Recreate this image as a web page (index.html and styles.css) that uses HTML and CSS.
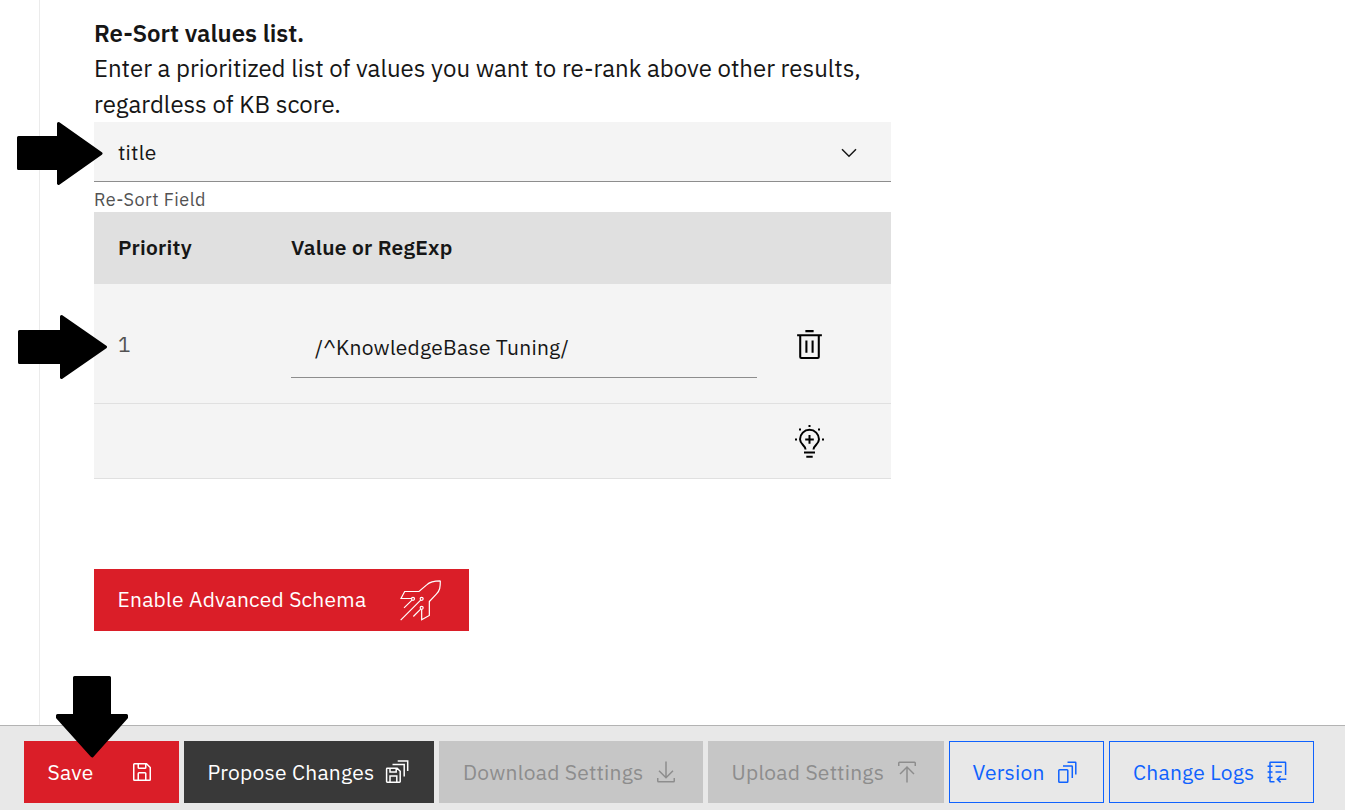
FILE: index.html
```html
<!DOCTYPE html>
<html lang="en">
<head>
<meta charset="utf-8">
<title>Re-Sort values list</title>
<link rel="stylesheet" href="styles.css">
</head>
<body>
<div class="app">
  <main class="main">
    <div class="rail"></div>
    <section class="panel">
      <h1 class="title">Re-Sort values list.</h1>
      <p class="intro">Enter a prioritized list of values you want to re-rank above other results,<br>regardless of KB score.</p>
      <div class="select">
        <span>title</span>
        <svg class="chevron" width="16" height="10" viewBox="0 0 16 10"><path d="M1 1.200L8 8.200L15 1.200" fill="none" stroke="#161616" stroke-width="1.500"/></svg>
      </div>
      <div class="helper">Re-Sort Field</div>
      <div class="table">
        <div class="row head"><span>Priority</span><span>Value or RegExp</span></div>
        <div class="row item">
          <span class="num">1</span>
          <div class="field">/^KnowledgeBase Tuning/</div>
          <svg class="row-icon" width="33" height="33" viewBox="0 0 32 32"><path d="M12 12h2v12h-2zM18 12h2v12h-2zM4 6v2h2v20a2 2 0 002 2h16a2 2 0 002-2V8h2V6zM8 28V8h16v20zM12 2h8v2h-8z"/></svg>
        </div>
        <div class="row add">
          <span></span><span></span>
          <svg class="row-icon" width="33" height="33" viewBox="0 0 33 33">
            <path d="M12.500 24.400C12.500 20.500 7 19.300 7 14.300a9.500 9.500 0 0 1 19 0C26 19.300 20.500 20.500 20.500 24.400M16.500 10.100v8.600M12.200 14.400h8.600M11 27.600h11M13.300 31.800h6.400" fill="none" stroke="#000" stroke-width="2"/>
            <path d="M15.500 0h2v2h-2zM6 3.500h2v2h-2zM25 3.500h2v2h-2zM2 13.400h2v2h-2zM29 13.400h2v2h-2z"/>
          </svg>
        </div>
      </div>
      <button class="btn schema"><span>Enable Advanced Schema</span>
        <svg width="41" height="41" viewBox="59 59 123 122" fill="none" stroke="#fff" stroke-width="3.600">
          <path d="M180 61C161 61 149 63 139 73L116 93H73L62 114H93M180 61C180 80 179 90 168 101L147 123V165L124 178V147"/>
          <circle cx="98" cy="115" r="4.500"/><circle cx="124" cy="115" r="4.500"/><circle cx="124" cy="142" r="4.500"/>
          <path d="M95 119L71 142M121 119L61 179M121 146L99 168"/>
        </svg>
      </button>
    </section>
  </main>
  <footer class="bar">
    <button class="btn save"><span>Save</span>
      <svg width="24" height="24" viewBox="0 0 32 32"><path d="M27.710 9.290l-5-5A1 1 0 0022 4H6A2 2 0 004 6V26a2 2 0 002 2H26a2 2 0 002-2V10A1 1 0 0027.710 9.290zM12 6h8v4H12zm8 20H12V18h8zm2 0V18a2 2 0 00-2-2H12a2 2 0 00-2 2v8H6V6h4v4a2 2 0 002 2h8a2 2 0 002-2V6.410l4 4V26z"/></svg>
    </button>
    <button class="btn propose"><span>Propose Changes</span>
      <svg width="24" height="24" viewBox="0 0 24 24" class="line"><path d="M2.300 8.200H12.200L15.200 11.200V21.500a.7.7 0 0 1-.7.7H2.300a.7.7 0 0 1-.7-.7V8.900a.7.700 0 0 1 .7-.7zM5 8.200v3.800h6.200v-3.800M5 22v-6h6.800v6M7.500 4.600H19.200V16.500M12.700.9H22.700V11"/></svg>
    </button>
    <button class="btn download"><span>Download Settings</span>
      <svg width="24" height="24" viewBox="0 0 32 32"><path d="M26 15l-1.410-1.410L17 21.170V2H15V21.170L7.410 13.590 6 15l10 10zM26 24v4H6v-4H4v4a2 2 0 002 2H26a2 2 0 002-2V24z"/></svg>
    </button>
    <button class="btn upload"><span>Upload Settings</span>
      <svg width="24" height="24" viewBox="0 0 32 32"><path d="M6 18l1.410 1.410L15 11.830V30h2V11.830l7.590 7.590L26 18 16 8zM6 8V4H26V8h2V4a2 2 0 00-2-2H6A2 2 0 004 4V8z"/></svg>
    </button>
    <button class="btn version"><span>Version</span>
      <svg width="24" height="24" viewBox="0 0 24 24" class="line"><rect x="3.800" y="9.700" width="9" height="12.500" rx=".8"/><path d="M8 5.900H16.700a.6.600 0 0 1 .6.600V18M12.500 2.200H20.200a.6.600 0 0 1 .6.600V14.500"/></svg>
    </button>
    <button class="btn logs"><span>Change Logs</span>
      <svg width="24" height="24" viewBox="0 0 24 24" class="line"><path d="M9.500 21.800H5.600a.6.600 0 0 1-.6-.6V2.800a.6.600 0 0 1 .6-.6H20a.6.600 0 0 1 .6.600V15M2.600 6.300H7.500M2.600 12H7.500M2.600 17.600H7.500M10.500 6.300H16.800M10.500 12H16.800M21.300 19.200H12.300M15.600 16L12.300 19.200L15.600 22.400"/></svg>
    </button>
  </footer>
</div>
<svg class="arrow arrow-select" width="86" height="64" viewBox="0 0 86 64"><path d="M1.500 15.500H41.500V1.500L84 31.500L41.500 61.500V46.500H1.500z"/></svg>
<svg class="arrow arrow-row" width="90" height="64" viewBox="0 0 90 64"><path d="M1.500 16.500H43.500V1.500L87.500 32L43.500 62.500V47.500H1.500z"/></svg>
<svg class="arrow arrow-save" width="73" height="84" viewBox="0 0 73 84"><path d="M18.500 1.500H53.500V39.500H70.500V41.500L36.200 80L1.500 41.500V39.500H18.500z"/></svg>
</body>
</html>
```

FILE: styles.css
```css
* { box-sizing: border-box; }
body {
  margin: 0;
  background: #fff;
  color: #161616;
  font-family: "IBM Plex Sans", Roboto, "Noto Sans", sans-serif;
  font-weight: 400;
}
svg { display: block; flex: none; }
.app { display: flex; flex-direction: column; height: 810px; overflow: hidden; }
.main { display: flex; flex: 1; min-height: 0; }
.rail { width: 40px; border-right: 1px solid #ebebeb; }
.panel { width: 797px; margin-left: 54px; padding-top: 16px; }
.title { margin: 0; font-size: 24px; line-height: 35px; font-weight: 600; }
.intro { margin: -1px 0 0; height: 72px; font-size: 24px; line-height: 36px; white-space: nowrap; }
.select {
  display: flex;
  align-items: center;
  justify-content: space-between;
  height: 60px;
  padding: 0 34px 0 24px;
  background: #f4f4f4;
  border-bottom: 1px solid #8d8d8d;
  font-size: 21px;
  letter-spacing: .24px;
}
.chevron { margin-top: 2px; }
.helper { height: 30px; padding-top: 6px; font-size: 18px; line-height: 24px; letter-spacing: .48px; color: #525252; }
.row {
  display: grid;
  grid-template-columns: 173px 466px auto;
  align-items: center;
  padding-left: 24px;
  background: #f4f4f4;
  border-bottom: 1px solid #e0e0e0;
  font-size: 21px;
  letter-spacing: .24px;
}
.head { height: 72px; padding-bottom: 2px; background: #e0e0e0; font-weight: 600; }
.item { height: 120px; }
.num { color: #525252; }
.field {
  height: 60px;
  margin-top: 8px;
  padding-left: 24px;
  line-height: 58px;
  border-bottom: 1px solid #8d8d8d;
}
.row-icon { margin-left: 36px; fill: #000; }
.item .row-icon { margin-top: 2px; }
.add { height: 75px; }
.btn {
  display: flex;
  align-items: center;
  justify-content: space-between;
  height: 62px;
  padding: 0 25px 0 23.500px;
  border: 0;
  color: #fff;
  font: 400 21px/28px "IBM Plex Sans", Roboto, "Noto Sans", sans-serif;
  letter-spacing: .24px;
  white-space: nowrap;
  fill: currentColor;
}
.line { fill: none; stroke: currentColor; stroke-width: 1.500; }
.schema { width: 375px; margin-top: 90px; padding-right: 28.500px; background: #da1e28; }
.schema span { padding-bottom: 2px; }
.bar { display: flex; gap: 5px; height: 85px; padding: 15px 0 0 24px; background: #e8e8e8; border-top: 1px solid #b3b3b3; }
.save { width: 155px; background: #da1e28; }
.propose { width: 250px; background: #393939; }
.download { width: 264px; padding-left: 24px; }
.upload { width: 236px; }
.download, .upload { background: #c6c6c6; color: #8d8d8d; }
.version, .logs { padding: 0 24px 0 22.500px; border: 1px solid #0f62fe; background: transparent; color: #0f62fe; }
.version { width: 155px; }
.logs { width: 205px; padding-left: 23px; }
.arrow { position: absolute; fill: #000; stroke: #000; stroke-width: 3; stroke-linejoin: round; }
.arrow-select { left: 17px; top: 122px; }
.arrow-row { left: 18px; top: 315px; }
.arrow-save { left: 56px; top: 676px; }
```
